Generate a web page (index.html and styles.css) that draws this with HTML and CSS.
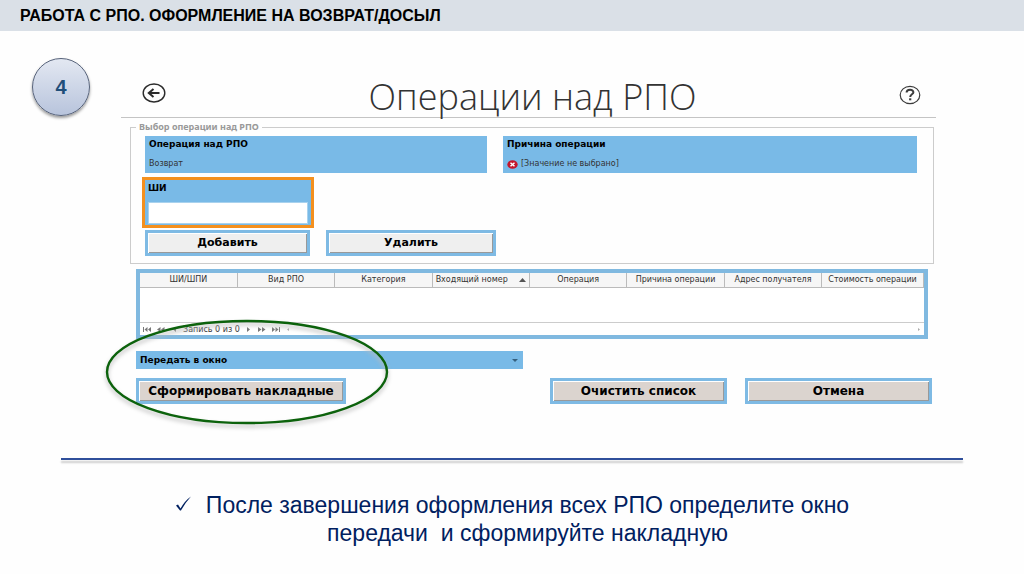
FILE: index.html
```html
<!DOCTYPE html>
<html lang="ru">
<head>
<meta charset="utf-8">
<meta name="viewport" content="width=device-width, initial-scale=1">
<title>Работа с РПО</title>
<link rel="stylesheet" href="styles.css">
</head>
<body>
<header class="topbar"><h1 class="topbar-title">РАБОТА С РПО. ОФОРМЛЕНИЕ НА ВОЗВРАТ/ДОСЫЛ</h1></header>
<main class="slide">
  <div class="step-column"><div class="step">4</div></div>
  <section class="window">
    <div class="titlebar">
      <button class="icon-button back" type="button" aria-label="Назад">
        <svg width="24" height="20" viewBox="0 0 24 20" fill="none" stroke="#2b2b2b"><ellipse cx="12" cy="10" rx="10.8" ry="9" stroke-width="1.4"/><path d="M6.5 10H17.5M11.5 6L6.8 10l4.7 4" stroke-width="2"/></svg>
      </button>
      <h2 class="window-title">Операции над РПО</h2>
      <button class="icon-button help" type="button" aria-label="Справка">
        <svg width="22" height="20" viewBox="0 0 22 20" fill="none" stroke="#3c3c3c"><ellipse cx="11" cy="10" rx="9.8" ry="8.6" stroke-width="1.2"/><path d="M7.6 7.6C7.6 4 14.4 4 14.4 7.2C14.4 9.4 11.2 9.2 11.2 12" stroke-width="2"/><path d="M11.2 13.3v2" stroke-width="2.2"/></svg>
      </button>
    </div>

    <fieldset class="group">
      <legend class="legend">Выбор операции над РПО</legend>
      <div class="fields">
        <div class="field">
          <span class="field-label">Операция над РПО</span>
          <span class="field-value">Возврат</span>
        </div>
        <div class="field">
          <span class="field-label">Причина операции</span>
          <span class="field-value">
            <svg class="error" width="11" height="9" viewBox="0 0 11 9"><ellipse cx="5.5" cy="4.5" rx="5.2" ry="4.3" fill="#c4162c"/><path d="M3.5 2.7l4 3.6M7.5 2.7l-4 3.6" stroke="#fff" stroke-width="1.5"/></svg>
            [Значение не выбрано]
          </span>
        </div>
      </div>
      <div class="code">
        <label class="field-label" for="code">ШИ</label>
        <input class="code-input" id="code" type="text">
      </div>
      <div class="edit-actions">
        <button class="button light" type="button">Добавить</button>
        <button class="button light" type="button">Удалить</button>
      </div>
    </fieldset>

    <div class="list">
      <table class="table">
        <thead><tr>
          <th>ШИ/ШПИ</th><th>Вид РПО</th><th>Категория</th>
          <th><span class="sort">Входящий номер <svg width="7" height="4" viewBox="0 0 7 4"><path d="M0 4L3.5 0L7 4z" fill="#555"/></svg></span></th>
          <th>Операция</th><th>Причина операции</th><th>Адрес получателя</th><th class="last">Стоимость операции</th>
        </tr></thead>
      </table>
      <div class="navigator">
        <button class="nav" type="button" aria-label="Первая"><svg width="8" height="5" viewBox="0 0 8 5"><path d="M0 0h1v5H0zM4.5 0v5L1.5 2.5zM8 0v5L5 2.5z"/></svg></button>
        <button class="nav" type="button" aria-label="Предыдущая страница"><svg width="8" height="5" viewBox="0 0 8 5"><path d="M3.5 0v5L0 2.5zM7.5 0v5L4 2.5z"/></svg></button>
        <button class="nav" type="button" aria-label="Предыдущая"><svg width="6" height="5" viewBox="0 0 6 5"><path d="M5 0v5L2 2.5z"/></svg></button>
        <span class="count">Запись 0 из 0</span>
        <button class="nav" type="button" aria-label="Следующая"><svg width="6" height="5" viewBox="0 0 6 5"><path d="M1 0v5l3-2.5z"/></svg></button>
        <button class="nav" type="button" aria-label="Следующая страница"><svg width="8" height="5" viewBox="0 0 8 5"><path d="M0 0v5l3.5-2.5zM4 0v5l3.5-2.5z"/></svg></button>
        <button class="nav" type="button" aria-label="Последняя"><svg width="8" height="5" viewBox="0 0 8 5"><path d="M0 0v5l3-2.5zM3.5 0v5l3-2.5zM7 0h1v5H7z"/></svg></button>
        <button class="nav scroll" type="button" aria-label="Прокрутить влево"><svg width="4" height="5" viewBox="0 0 4 5"><path d="M3 1v3L1 2.5z"/></svg></button>
        <button class="nav scroll right" type="button" aria-label="Прокрутить вправо"><svg width="4" height="5" viewBox="0 0 4 5"><path d="M1 1v3l2-1.5z"/></svg></button>
      </div>
    </div>

    <div class="footer">
      <div class="select-wrap">
        <select class="select" aria-label="Передать в окно"><option>Передать в окно</option></select>
        <svg class="arrow" width="6" height="3" viewBox="0 0 6 3"><path d="M0 0h6L3 3z" fill="#35607f"/></svg>
      </div>
      <div class="final-actions">
        <button class="button large" type="button">Сформировать накладные</button>
        <button class="button large clear" type="button">Очистить список</button>
        <button class="button large" type="button">Отмена</button>
      </div>
      <svg class="highlight" width="286" height="112" viewBox="0 0 286 112" fill="none"><ellipse cx="143" cy="54" rx="140" ry="51" stroke="#0c620c" stroke-width="2.4"/></svg>
    </div>
  </section>
</main>
<hr class="divider">
<footer class="note">
  <svg class="check" width="17" height="16" viewBox="0 0 17 16"><path d="M1 9.500L3 8.500L5.500 12.500Q10 4.500 16 0.500Q10 7 6 14.500H5Z" fill="#002060"/></svg>
  <p class="note-text">После завершения оформления всех РПО определите окно<br>передачи&nbsp; и сформируйте накладную</p>
</footer>
</body>
</html>
```
FILE: styles.css
```css
* { box-sizing: border-box; }
body {
  margin: 0;
  background: #fefefe;
  font-family: "DejaVu Sans", sans-serif;
  font-size: 8px;
  color: #333;
}
button, input, select { font: inherit; color: inherit; margin: 0; border-radius: 0; }
.topbar {
  height: 31px;
  padding: 0 20px;
  display: flex;
  align-items: center;
  background: #dae0e7;
}
.topbar-title {
  margin: 0;
  font: bold 16px/18px "Liberation Sans", sans-serif;
  color: #000;
}
.slide {
  display: grid;
  grid-template-columns: 121px 1fr;
  padding-right: 88px;
}
.step-column { padding: 27px 0 0 32px; }
.step {
  width: 58px;
  height: 58px;
  display: grid;
  place-items: center;
  border: 1px solid #56627a;
  border-radius: 50%;
  background: linear-gradient(#e3e8f2, #b8c4dc);
  box-shadow: 0 2px 3px #999;
  font: bold 20px/24px "Liberation Sans", sans-serif;
  color: #1f4e79;
}
.titlebar {
  height: 87px;
  padding: 0 14px 0 20px;
  display: grid;
  grid-template-columns: 26px 1fr 24px;
  align-items: end;
  border-bottom: 1px solid #c4c4c4;
}
.window-title {
  margin: 0;
  text-align: center;
  font: 300 36px/40px "Open Sans", sans-serif;
  color: #333;
}
.icon-button { padding: 0; border: 0; background: none; line-height: 0; }
.back { padding-bottom: 14px; }
.help { padding-bottom: 12px; }
.group {
  margin: 4px 2px 0 9px;
  padding: 4px 16px 7px 14px;
  min-width: 0;
  border: 1px solid #ccc;
}
.legend {
  margin-left: -9px;
  padding: 0 3px;
  font: bold 9px/10px "Noto Sans", sans-serif;
  color: #999;
}
.fields { display: grid; grid-template-columns: 342fr 414fr; gap: 16px; }
.field {
  height: 37px;
  padding: 2px 4px 3px;
  display: flex;
  flex-direction: column;
  justify-content: space-between;
  background: #79bae7;
}
.field-label { display: block; font: bold 9px/12px "DejaVu Sans", sans-serif; color: #000; }
.field-value { display: flex; align-items: center; gap: 3px; line-height: 12px; }
.code {
  width: 172px;
  margin: 4px 0 2px -3px;
  padding: 2px 3px 1px;
  border: 3px solid #f4901e;
  background: #79bae7;
}
.code-input {
  display: block;
  width: 100%;
  height: 22px;
  margin-top: 8px;
  padding: 0 4px;
  border: 1px solid #a9d2ee;
  background: #fff;
}
.edit-actions { display: grid; grid-template-columns: 165px 170px; gap: 16px; }
.button {
  height: 26px;
  padding: 0;
  border: 3px solid #7ebae4;
  background: #dbd4cf;
  box-shadow: inset 1px 1px #fff, inset -1px -1px #999;
  font: bold 11px/14px "DejaVu Sans", sans-serif;
  color: #000;
}
.light { background: #efefef; }
.large { font-size: 12px; }
.list {
  margin: 5px 8px 0 15px;
  height: 70px;
  display: flex;
  flex-direction: column;
  justify-content: space-between;
  border: 4px solid #80b9e0;
  background: #fff;
}
.table { width: 100%; table-layout: fixed; border-collapse: collapse; }
.table th {
  height: 14px;
  padding: 0;
  border-right: 1px solid #bbb;
  border-bottom: 1px solid #bbb;
  background: #f6f6f6;
  font-weight: normal;
  line-height: 10px;
  white-space: nowrap;
}
.table .last { width: 13%; }
.sort { display: flex; align-items: center; justify-content: space-between; padding: 0 3px; }
.navigator {
  height: 13px;
  padding: 0 3px;
  display: flex;
  align-items: center;
  gap: 6px;
  border-top: 1px solid #ccc;
}
.nav { padding: 0; border: 0; background: none; line-height: 0; fill: #777; }
.scroll { fill: #aaa; }
.right { margin-left: auto; }
.footer { position: relative; margin: 12px 4px 0 15px; }
.select-wrap { width: 387px; max-width: 100%; display: grid; align-items: center; }
.select {
  grid-area: 1 / 1;
  width: 100%;
  height: 18px;
  padding: 0 4px;
  border: 0;
  appearance: none;
  background: #79bae7;
  font: bold 9px/12px "DejaVu Sans", sans-serif;
  color: #000;
}
.arrow { grid-area: 1 / 1; justify-self: end; margin-right: 5px; pointer-events: none; }
.final-actions {
  margin-top: 9px;
  display: grid;
  grid-template-columns: 210px 1fr 177px 187px;
  column-gap: 18px;
}
.clear { grid-column: 3; }
.highlight {
  position: absolute;
  left: -32px;
  top: -33px;
  pointer-events: none;
  filter: drop-shadow(0 3px 2px #bbb);
}
.divider {
  margin: 54px 61px 0;
  border: 0;
  border-top: 2px solid #2f4f9b;
  box-shadow: 0 3px 2px #ccc;
}
.note {
  margin-top: 31px;
  display: flex;
  justify-content: center;
  gap: 14px;
}
.check { margin-top: 5px; }
.note-text {
  margin: 0;
  text-align: center;
  font: 23px/28px "Liberation Sans", sans-serif;
  color: #002060;
}
```
